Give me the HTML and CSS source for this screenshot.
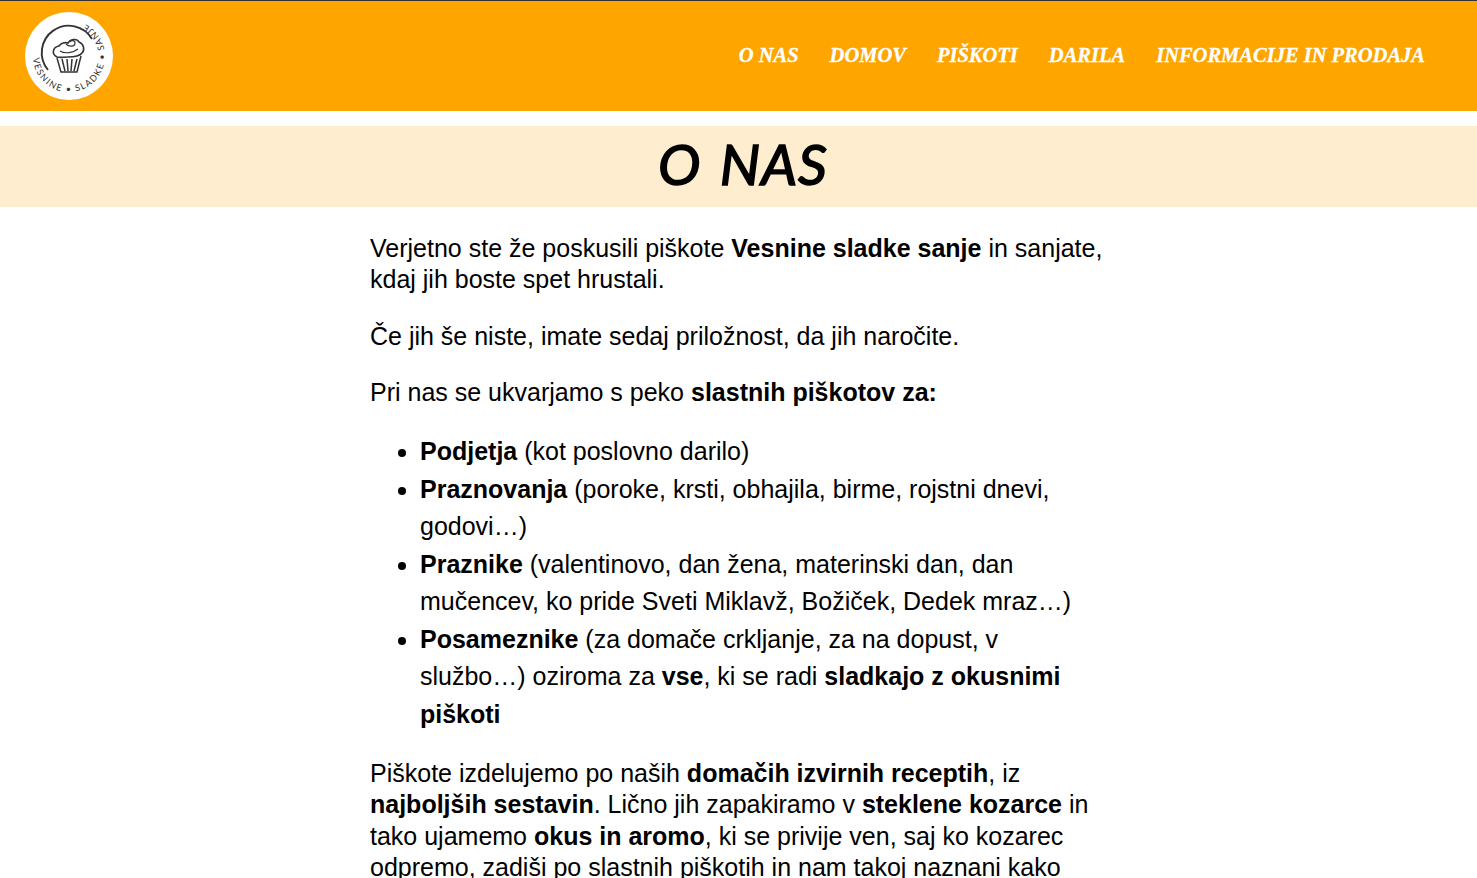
FILE: index.html
```html
<!DOCTYPE html>
<html lang="sl">
<head>
<meta charset="utf-8">
<title>O nas</title>
<link rel="stylesheet" href="styles.css">
</head>
<body>
<header class="site-header">
  <a class="logo" href="#">
    <svg width="88" height="88" viewBox="0 0 88 88">
      <circle cx="44" cy="44" r="44" fill="#fff"/>
      <path d="M67 27 A27 27 0 1 0 23 58" fill="none" stroke="#333" stroke-width="1.9"/>
      <defs><path id="ring" d="M8 46 A36 36 0 1 0 62 13"/></defs>
      <text class="logo-text" textLength="150"><textPath href="#ring">VESNINE • SLADKE • SANJE</textPath></text>
      <path d="M32 45 C26 42 28 35 34 34 C36 31 40 30 43 31 C45 27 52 26 54 30 C59 32 60 38 57 41 C54 45 48 45 43 45 C39 45 35 46 32 45 Z" fill="#fff" stroke="#333" stroke-width="1.6"/>
      <path d="M41 32 C44 35 50 35 50 31 C50 28 46 28 45 30 M35 39 C40 42 48 41 53 37" fill="none" stroke="#333" stroke-width="1.2"/>
      <path d="M32 46 L36 60 L52 60 L56 44 M37 47 L40 59 M42 47 L43 59 M47 47 L46 59 M52 47 L49 59" fill="none" stroke="#333" stroke-width="1.5"/>
    </svg>
  </a>
  <nav class="main-nav">
    <a href="#">O NAS</a>
    <a href="#">DOMOV</a>
    <a href="#">PIŠKOTI</a>
    <a href="#">DARILA</a>
    <a href="#">INFORMACIJE IN PRODAJA</a>
  </nav>
</header>
<h1 class="page-title">O NAS</h1>
<main class="content">
  <p>Verjetno ste že poskusili piškote <b>Vesnine sladke sanje</b> in sanjate, kdaj jih boste spet hrustali.</p>
  <p>Če jih še niste, imate sedaj priložnost, da jih naročite.</p>
  <p>Pri nas se ukvarjamo s peko <b>slastnih piškotov za:</b></p>
  <ul>
    <li><b>Podjetja</b> (kot poslovno darilo)</li>
    <li><b>Praznovanja</b> (poroke, krsti, obhajila, birme, rojstni dnevi, godovi…)</li>
    <li><b>Praznike</b> (valentinovo, dan žena, materinski dan, dan mučencev, ko pride Sveti Miklavž, Božiček, Dedek mraz…)</li>
    <li><b>Posameznike</b> (za domače crkljanje, za na dopust, v službo…) oziroma za <b>vse</b>, ki se radi <b>sladkajo z okusnimi piškoti</b></li>
  </ul>
  <p>Piškote izdelujemo po naših <b>domačih izvirnih receptih</b>, iz <b>najboljših sestavin</b>. Lično jih zapakiramo v <b>steklene kozarce</b> in tako ujamemo <b>okus in aromo</b>, ki se privije ven, saj ko kozarec odpremo, zadiši po slastnih piškotih in nam takoj naznani kako</p>
</main>
</body>
</html>
```
FILE: styles.css
```css
html, body { margin: 0; padding: 0; }
html { height: 100%; overflow: hidden; }
body {
  font-family: "Liberation Sans", Arial, sans-serif;
  font-size: 25px;
  color: #000;
  background: #fff;
}
.site-header {
  display: flex;
  align-items: center;
  justify-content: space-between;
  height: 110px;
  background: #ffa500;
  border-top: 1px solid #333;
  padding: 0 52px 0 25px;
}
.logo { display: block; height: 88px; }
.logo-text {
  font-family: "Lato", sans-serif;
  font-size: 9px;
  fill: #333;
}
.main-nav {
  display: flex;
  gap: 31px;
  padding-bottom: 2px;
}
.main-nav a {
  color: #fff;
  text-decoration: none;
  font-family: "Liberation Serif", serif;
  font-style: italic;
  font-weight: bold;
  font-size: 20.5px;
  -webkit-text-stroke: 0.3px #fff;
}
.page-title {
  margin: 15px 0 0;
  height: 81px;
  padding-left: 9px;
  line-height: 75px;
  text-align: center;
  background: #ffedd0;
  font-family: "Lato", sans-serif;
  font-style: italic;
  font-weight: 400;
  font-size: 57px;
  letter-spacing: 1px;
  word-spacing: 4px;
  -webkit-text-stroke: 1.5px #000;
}
.content {
  width: 737px;
  margin: 0 auto;
  padding-top: 25.5px;
  line-height: 31.5px;
}
.content p { margin: 0 0 25px; }
.content ul { margin: -0.25px 0 24.5px; padding-left: 50px; line-height: 37.5px; }
```
